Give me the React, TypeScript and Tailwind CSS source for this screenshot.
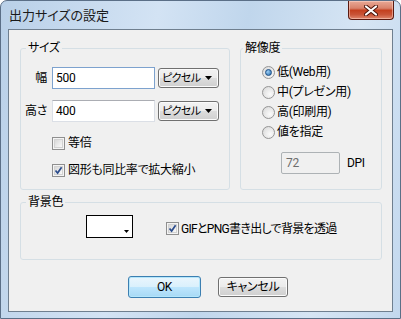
import React from "react";

function Check({ checked }: { checked?: boolean }) {
  return (
    <span className="relative flex w-[13px] h-[13px] shrink-0 border border-[#8f8f8f] bg-[#f4f4f4] p-[1px]">
      <span className="w-full h-full border border-[#d2d2d2] bg-[linear-gradient(135deg,#d8d8d8,#f9f9f9)]" />
      {checked && (
        <svg className="absolute left-[1px] top-[1px]" width="9" height="9" viewBox="0 0 9 9">
          <path d="M1.5 4.5 L3.6 7 L7.6 1.2" stroke="#2b4c8c" strokeWidth="1.7" fill="none" />
        </svg>
      )}
    </span>
  );
}

function Radio({ checked }: { checked?: boolean }) {
  return (
    <span className="flex w-[13px] h-[13px] shrink-0 items-center justify-center rounded-full border border-[#959595] bg-[radial-gradient(circle_at_65%_65%,#fbfbfb,#d6d6d6)]">
      {checked && (
        <span className="w-[7px] h-[7px] rounded-full border border-[#1c4f85] bg-[radial-gradient(circle_at_35%_35%,#9cd0f7,#2467a8)]" />
      )}
    </span>
  );
}

function Select() {
  return (
    <div className="ml-[3px] flex h-[20px] w-[61px] items-center justify-between whitespace-nowrap rounded-[3px] border border-[#707070] bg-[linear-gradient(to_bottom,#f2f2f2_0%,#ebebeb_50%,#dddddd_50%,#cfcfcf_100%)] pl-[3px] pr-[6px] shadow-[inset_0_0_0_1px_#fbfbfb]">
      <span className="text-[11px] leading-none tracking-[-0.6px]">ピクセル</span>
      <svg width="7" height="4" viewBox="0 0 7 4" className="shrink-0">
        <path d="M0 0h7L3.5 4z" fill="#000" />
      </svg>
    </div>
  );
}

export default function App() {
  return (
    <div className="flex h-[319px] w-[401px] flex-col overflow-hidden rounded-t-[7px] border border-[#5b6f87] bg-[linear-gradient(100deg,#b9d0e8_0%,#d3e3f4_35%,#c0d6ec_55%,#d6e5f4_80%,#c3d8ee_100%)] font-['Roboto','Noto_Sans_CJK_JP',sans-serif] text-[12px] tracking-[-0.3px] text-black [font-feature-settings:'palt']">
      {/* title bar */}
      <div className="flex h-[28px] items-start justify-between">
        <span className="self-center pl-[8px] pt-[1px] text-[13px] leading-none tracking-normal text-[#1a1a1a]">出力サイズの設定</span>
        <div className="mr-[6px] flex h-[19px] w-[46px] items-center justify-center rounded-b-[4px] border border-t-0 border-[#5a1a10] bg-[linear-gradient(to_bottom,#e9a996_0%,#d9826b_40%,#c4401f_52%,#c95437_75%,#e0876d_100%)] shadow-[inset_0_0_0_1px_rgba(255,220,210,0.5)]">
          <svg width="14" height="11" viewBox="0 0 14 11">
            <path d="M2 1.5 L12 9.5 M12 1.5 L2 9.5" stroke="#4a1208" strokeWidth="4" strokeLinecap="round" />
            <path d="M2 1.5 L12 9.5 M12 1.5 L2 9.5" stroke="#ffffff" strokeWidth="2.2" strokeLinecap="round" />
          </svg>
        </div>
      </div>

      {/* client area */}
      <div className="mx-[7px] mb-[6px] flex h-[283px] flex-col border border-[#6f7f8f] bg-[#f0f0f0] pl-[11px] pt-[10px]">
        <div className="flex">
          {/* size group */}
          <fieldset className="h-[150px] w-[210px] rounded-[3px] border border-[#d5dfe5]">
            <legend className="ml-[5px] px-[2px] leading-[16px]">サイズ</legend>
            <div className="mt-[11px] flex items-center">
              <span className="w-[26px] text-right leading-none">幅</span>
              <div className="ml-[5px] flex h-[22px] w-[103px] items-center border border-[#7da2ce] bg-white pl-[3px]">500</div>
              <Select />
            </div>
            <div className="mt-[11px] flex items-center">
              <span className="w-[26px] text-right leading-none">高さ</span>
              <div className="ml-[5px] flex h-[22px] w-[103px] items-center border border-[#dbdfe6] border-t-[#abadb3] bg-white pl-[3px]">400</div>
              <Select />
            </div>
            <div className="ml-[31px] mt-[13px] flex h-[16px] items-center">
              <Check />
              <span className="ml-[3px]">等倍</span>
            </div>
            <div className="ml-[31px] mt-[11px] flex h-[16px] items-center">
              <Check checked />
              <span className="ml-[3px]">図形も同比率で拡大縮小</span>
            </div>
          </fieldset>

          {/* resolution group */}
          <fieldset className="ml-[10px] h-[150px] w-[142px] rounded-[3px] border border-[#d5dfe5]">
            <legend className="ml-[2px] px-[2px] leading-[16px]">解像度</legend>
            <div className="ml-[21px] mt-[6px] flex flex-col">
              <div className="flex h-[20px] items-center">
                <Radio checked />
                <span className="ml-[2px]">低(Web用)</span>
              </div>
              <div className="flex h-[20px] items-center">
                <Radio />
                <span className="ml-[2px]">中(プレゼン用)</span>
              </div>
              <div className="flex h-[20px] items-center">
                <Radio />
                <span className="ml-[2px]">高(印刷用)</span>
              </div>
              <div className="flex h-[20px] items-center">
                <Radio />
                <span className="ml-[2px]">値を指定</span>
              </div>
            </div>
            <div className="ml-[40px] mt-[10px] flex items-center">
              <div className="flex h-[22px] w-[59px] items-center rounded-[2px] border border-[#adb2b5] bg-[#f0f0f0] pl-[4px] text-[#6d6d6d]">72</div>
              <span className="ml-[7px]">DPI</span>
            </div>
          </fieldset>
        </div>

        {/* background group */}
        <fieldset className="mt-[4px] h-[66px] w-[362px] rounded-[3px] border border-[#d5dfe5]">
          <legend className="ml-[5px] px-[2px] leading-[16px]">背景色</legend>
          <div className="mt-[5px] flex items-center">
            <div className="ml-[65px] flex h-[23px] w-[47px] items-end justify-end border border-black bg-white pb-[4px] pr-[3px]">
              <svg width="5" height="3" viewBox="0 0 5 3">
                <path d="M0 0h5L2.5 3z" fill="#000" />
              </svg>
            </div>
            <div className="ml-[33px] mt-[4px] flex items-center">
              <Check checked />
              <span className="ml-[2px] tracking-[-0.7px]">GIFとPNG書き出しで背景を透過</span>
            </div>
          </div>
        </fieldset>

        {/* buttons */}
        <div className="mt-[16px] flex items-center">
          <div className="ml-[108px] flex h-[22px] w-[73px] items-center justify-center rounded-[3px] border border-[#3c7fb1] bg-[linear-gradient(to_bottom,#eaf6fd_0%,#d9f0fc_50%,#bee6fd_50%,#a7d9f5_100%)] shadow-[inset_0_0_0_1px_#b4e6fb]">
            OK
          </div>
          <div className="ml-[17px] flex h-[20px] w-[70px] items-center justify-center rounded-[3px] border border-[#707070] bg-[linear-gradient(to_bottom,#f2f2f2_0%,#ebebeb_50%,#dddddd_50%,#cfcfcf_100%)] shadow-[inset_0_0_0_1px_#fbfbfb]">
            キャンセル
          </div>
        </div>
      </div>
    </div>
  );
}
